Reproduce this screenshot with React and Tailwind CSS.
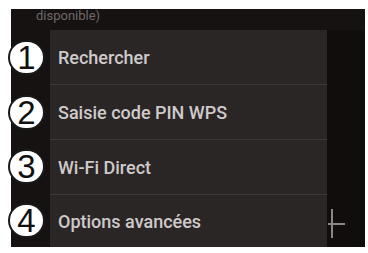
import React from "react";

const items = ["Rechercher", "Saisie code PIN WPS", "Wi-Fi Direct", "Options avancées"];

const Callout = ({ n, top }) => (
  <div
    className="absolute left-[8px] w-[37px] h-[35px] rounded-full bg-white border-2 border-[#1a1a1a] flex items-center justify-center text-[33px] leading-none text-[#111] font-['Liberation_Sans',sans-serif]"
    style={{ top }}
  >
    {n}
  </div>
);

export default function App() {
  return (
    <div className="relative w-[368px] h-[253px] bg-white pt-[9px] pl-[11px] pr-[3px] pb-[6px] font-['Roboto',sans-serif]">
      <div className="w-full h-full bg-[#161212] flex flex-col overflow-hidden">
        {/* status text */}
        <div className="h-[21px] pl-[25px]">
          <div className="-mt-[1px] text-[13px] leading-[15px] text-[#6e6868]">disponible)</div>
        </div>
        <div className="flex flex-1">
          <div className="w-[39px]" />
          <div className="w-[277px] bg-[#2a2626] flex flex-col">
            {items.map((label, i) => (
              <div
                key={label}
                className={`flex items-center pl-[8px] text-[18px] font-medium text-[#cfcaca] ${
                  i < 3 ? "h-[55px] border-b border-[#3d3838]" : "flex-1"
                }`}
              >
                {label}
              </div>
            ))}
          </div>
          <div className="flex-1 bg-[#110d0d] flex items-end pb-[9px] pl-[1px]">
            <div className="relative w-[17px] h-[29px]">
              <div className="absolute left-[3px] top-0 w-[2px] h-full bg-[#8a8686]" />
              <div className="absolute left-0 top-[14px] w-[17px] h-[2px] bg-[#8a8686]" />
            </div>
          </div>
        </div>
      </div>
      <Callout n="1" top={40} />
      <Callout n="2" top={95} />
      <Callout n="3" top={149} />
      <Callout n="4" top={203} />
    </div>
  );
}
